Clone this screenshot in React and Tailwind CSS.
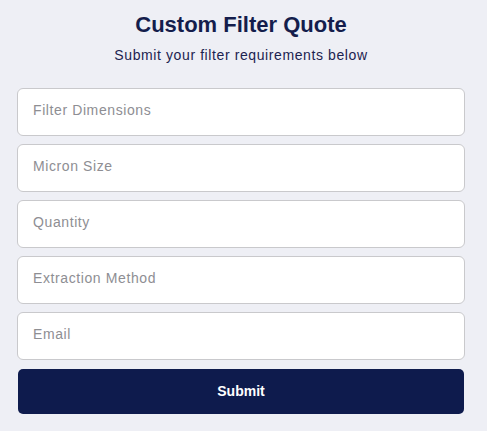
import React from 'react';

const fields = ['Filter Dimensions', 'Micron Size', 'Quantity', 'Extraction Method', 'Email'];

export default function App() {
  return (
    <div className="min-h-screen bg-[#eeeff5] font-['Liberation_Sans',Arial,sans-serif]">
      <div className="w-[448px] ml-[17px] pt-[11px]">
        <h1 className="text-center text-[22px] font-bold leading-[28px] text-[#141d4c]">Custom Filter Quote</h1>
        <p className="mt-[7px] text-center text-[14px] leading-[18px] text-[#1c2350] tracking-[0.6px]">
          Submit your filter requirements below
        </p>
        <form className="mt-[24px] flex flex-col gap-2" onSubmit={(e) => e.preventDefault()}>
          {fields.map((f) => (
            <input
              key={f}
              type="text"
              placeholder={f}
              className="h-[48px] w-full rounded-[6px] border border-[#c9c9cc] bg-white px-[15px] pb-[4px] text-[14px] tracking-[0.6px] text-gray-800 placeholder:text-[#8e8e93] outline-none"
            />
          ))}
          <button
            type="submit"
            className="mt-[1px] mx-[1px] h-[45px] rounded-[5px] bg-[#0e1b4d] text-[14px] font-bold text-white"
          >
            Submit
          </button>
        </form>
      </div>
    </div>
  );
}
